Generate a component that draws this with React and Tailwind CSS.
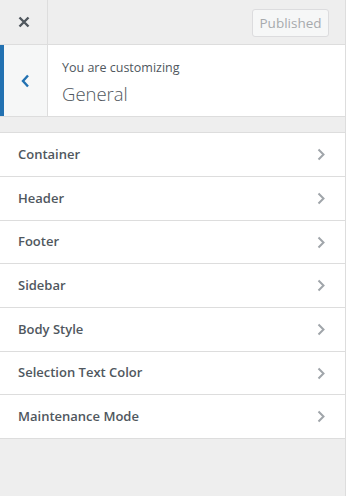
import React from "react";

const items = [
  ["Container", "h-[44px]"],
  ["Header", "h-[44px]"],
  ["Footer", "h-[43px]"],
  ["Sidebar", "h-[44px]"],
  ["Body Style", "h-[44px]"],
  ["Selection Text Color", "h-[43px]"],
  ["Maintenance Mode", "h-[44px]"],
];

function ChevronRight() {
  return (
    <svg width="8" height="13" viewBox="0 0 8 13" className="block">
      <path d="M1.5 1.5 L6.5 6.5 L1.5 11.5" fill="none" stroke="#a0a5aa" strokeWidth="2" />
    </svg>
  );
}

export default function App() {
  return (
    <div
      className="w-[347px] h-[496px] bg-white"
      style={{ fontFamily: '"Segoe UI", "Open Sans", sans-serif' }}
    >
      <div className="w-[346px] h-[496px] bg-[#eeeeee] border-r border-[#dddddd] flex flex-col">
        {/* top bar */}
        <div className="h-[45px] flex border-b border-[#dddddd]">
          <div className="w-[48px] border-r border-[#dddddd] flex items-center justify-center">
            <svg width="12" height="12" viewBox="0 0 12 12" className="block">
              <path d="M1.5 1.5 L10.5 10.5 M10.5 1.5 L1.5 10.5" stroke="#50575e" strokeWidth="2.4" />
            </svg>
          </div>
          <div className="flex-1 flex items-start justify-end pr-[16px] pt-[9px]">
            <div className="w-[77px] h-[28px] border border-[#dcdcde] bg-[#f6f7f7] rounded-[3px] flex items-center justify-center text-[13.5px] text-[#a7aaad]">
              Published
            </div>
          </div>
        </div>
        {/* panel info */}
        <div className="h-[72px] flex bg-white border-b border-[#dddddd]">
          <div className="w-[48px] flex bg-[#f6f7f7] border-r border-[#dddddd]">
            <div className="w-[4px] bg-[#2271b1]" />
            <div className="flex-1 flex items-center justify-center">
              <svg width="9" height="14" viewBox="0 0 9 14" className="block">
                <path d="M7 1.5 L2 7 L7 12.5" fill="none" stroke="#2271b1" strokeWidth="2.4" />
              </svg>
            </div>
          </div>
          <div className="flex-1 pl-[14px] pt-[15px] text-[#50575e]">
            <div className="text-[12.5px] leading-[16px]">You are customizing</div>
            <div className="text-[18.5px] leading-[26px] mt-[5px] font-light text-[#50575e]">General</div>
          </div>
        </div>
        {/* list */}
        <div className="mt-[15px] border-t border-[#dddddd] bg-white">
          {items.map(([t, h]) => (
            <div
              key={t}
              className={`${h} border-b border-[#dddddd] flex items-center justify-between pl-[18px] pr-[20px]`}
            >
              <span className="text-[13px] font-semibold text-[#50575e]">{t}</span>
              <ChevronRight />
            </div>
          ))}
        </div>
      </div>
    </div>
  );
}
